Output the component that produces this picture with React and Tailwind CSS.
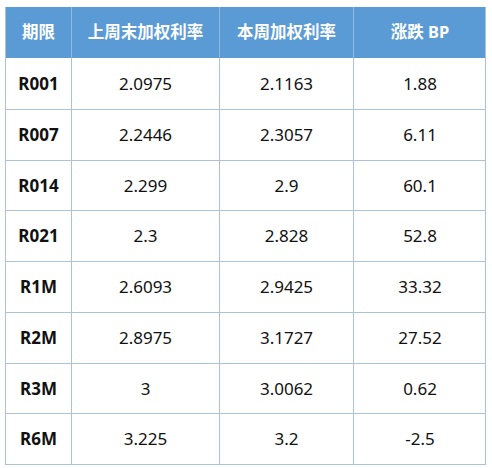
import React from "react";

const rows = [
  ["R001", "2.0975", "2.1163", "1.88"],
  ["R007", "2.2446", "2.3057", "6.11"],
  ["R014", "2.299", "2.9", "60.1"],
  ["R021", "2.3", "2.828", "52.8"],
  ["R1M", "2.6093", "2.9425", "33.32"],
  ["R2M", "2.8975", "3.1727", "27.52"],
  ["R3M", "3", "3.0062", "0.62"],
  ["R6M", "3.225", "3.2", "-2.5"],
];

const cols = "grid grid-cols-[65px_148px_134px_133px]";

export default function App() {
  return (
    <div
      className="w-[492px] h-[468px] bg-white pt-[7px] pl-[5px]"
      style={{ fontFamily: '"Noto Sans", "Noto Sans CJK SC", sans-serif' }}
    >
      <div className="w-[481px] border-l border-r border-b border-[#adc1d8]">
        <div className={`${cols} h-[51px] bg-[#5b9bd5] text-white font-bold text-[16.5px]`}>
          {["期限", "上周末加权利率", "本周加权利率", "涨跌 BP"].map((h, i) => (
            <div
              key={i}
              className={`flex items-center justify-center ${i > 0 ? "border-l border-[#8fbbe3]" : ""}`}
            >
              {h}
            </div>
          ))}
        </div>
        {rows.map((r, ri) => (
          <div
            key={ri}
            className={`${cols} h-[50.75px] ${ri > 0 ? "border-t border-[#adc1d8]" : ""} text-[17px] text-[#111]`}
          >
            {r.map((c, ci) => (
              <div
                key={ci}
                className={`flex items-center justify-center ${ci > 0 ? "border-l border-[#adc1d8]" : ""} ${ci === 0 ? "font-bold" : ""}`}
              >
                {c}
              </div>
            ))}
          </div>
        ))}
      </div>
    </div>
  );
}
